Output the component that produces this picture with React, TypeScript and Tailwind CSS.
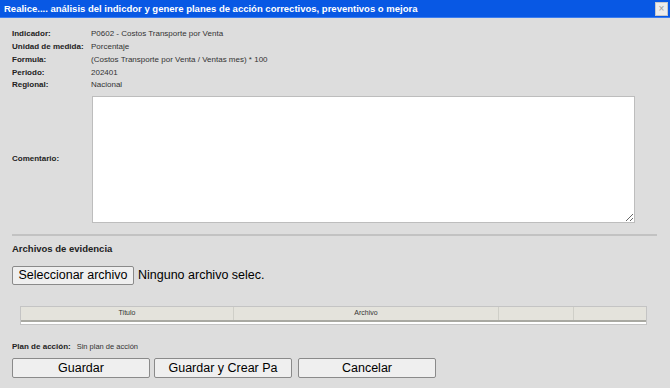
import React from "react";

const info: [string, string][] = [
  ["Indicador:", "P0602 - Costos Transporte por Venta"],
  ["Unidad de medida:", "Porcentaje"],
  ["Formula:", "(Costos Transporte por Venta / Ventas mes) * 100"],
  ["Periodo:", "202401"],
  ["Regional:", "Nacional"],
];

export default function App() {
  return (
    <div className="w-[670px] h-[388px] overflow-hidden bg-[#dddddd] font-['Liberation_Sans',Arial,sans-serif] text-black">
      {/* Title bar */}
      <div className="h-[18px] bg-[#0858e4] border-b border-[#3b7df0] flex items-center justify-between pl-[4px] pr-[2px]">
        <span className="text-white font-bold text-[9.5px] leading-none">
          Realice.... análisis del indicdor y genere planes de acción correctivos, preventivos o mejora
        </span>
        <button className="w-[13px] h-[14px] bg-[#ececec] border border-[#c8c8c8] flex items-center justify-center text-[#9a9a9a] text-[10px] leading-none">
          ×
        </button>
      </div>

      <div className="px-3">
        {/* Info rows */}
        <div className="mt-[10px] flex flex-col">
          {info.map(([k, v]) => (
            <div key={k} className="flex h-[12.75px] items-center text-[8px]">
              <span className="w-[79px] font-bold text-[#222]">{k}</span>
              <span className="text-[#333]">{v}</span>
            </div>
          ))}
        </div>

        {/* Comment */}
        <div className="mt-[4px] flex items-center">
          <span className="w-[80px] text-[8px] font-bold text-[#222]">Comentario:</span>
          <textarea className="w-[543px] h-[127px] bg-white border border-[#bdbdbd] outline-none" />
        </div>

        <div className="mt-[11px] h-[2px] w-[645px] bg-[#c2c2c2]" />

        <div className="mt-[6px] text-[9.5px] font-bold text-[#222]">Archivos de evidencia</div>

        {/* File input */}
        <div className="mt-[10px] flex items-center">
          <button className="h-[19px] w-[122px] bg-[#efefef] border border-[#8a8a8a] rounded-[2px] text-[12.5px] leading-none text-black">
            Seleccionar archivo
          </button>
          <span className="ml-[4px] text-[12.5px] text-black">Ninguno archivo selec.</span>
        </div>

        {/* Table */}
        <div className="mt-[21px] ml-[8px] w-[627px] border border-[#c4c4c4] bg-white">
          <div className="flex h-[15px] bg-[#e4e3dc] border-b-[2px] border-[#a9a9a2] text-[7px] text-[#333]">
            <div className="w-[213px] flex items-center justify-center border-r border-[#cfcfc8]">Titulo</div>
            <div className="w-[265px] flex items-center justify-center border-r border-[#cfcfc8]">Archivo</div>
            <div className="w-[75px] border-r border-[#cfcfc8]" />
            <div className="flex-1" />
          </div>
          <div className="h-[2px] bg-white" />
        </div>

        {/* Plan de acción */}
        <div className="mt-[16px] flex items-center text-[8px]">
          <span className="font-bold text-[#222]">Plan de acción:</span>
          <span className="ml-[6px] text-[7.5px] text-[#333]">Sin plan de acción</span>
        </div>

        {/* Buttons */}
        <div className="mt-[5px] flex">
          <button className="w-[138px] h-[20px] bg-[#efefef] border border-[#8a8a8a] rounded-[2px] text-[12.5px] leading-none">
            Guardar
          </button>
          <button className="ml-[4px] w-[138px] h-[20px] bg-[#efefef] border border-[#8a8a8a] rounded-[2px] text-[12.5px] leading-none">
            Guardar y Crear Pa
          </button>
          <button className="ml-[6px] w-[138px] h-[20px] bg-[#efefef] border border-[#8a8a8a] rounded-[2px] text-[12.5px] leading-none">
            Cancelar
          </button>
        </div>
      </div>
    </div>
  );
}
